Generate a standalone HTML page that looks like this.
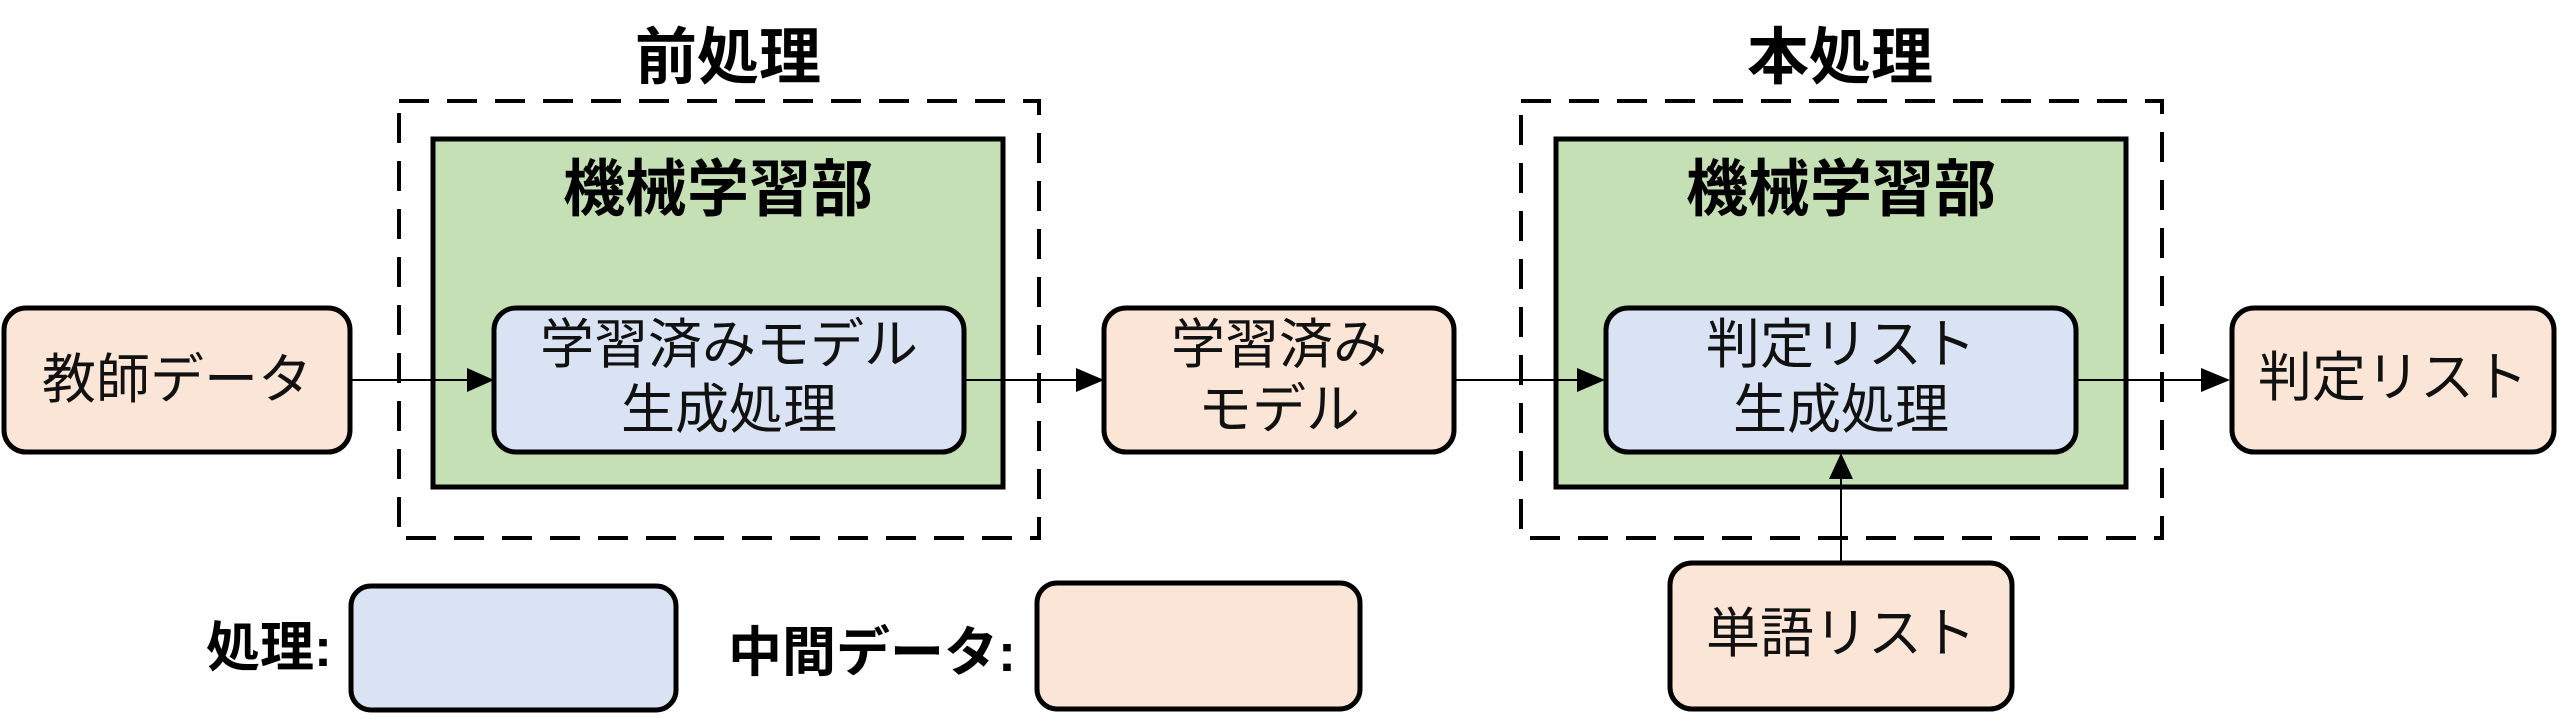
<!DOCTYPE html>
<html><head><meta charset="utf-8"><style>
html,body{margin:0;padding:0;background:#fff;}
svg{display:block;}
text{font-family:"Liberation Sans","Noto Sans CJK JP",sans-serif;}
.n{font-size:54px;fill:#111;text-anchor:middle;dominant-baseline:central;}
.b{font-weight:bold;fill:#000;text-anchor:middle;dominant-baseline:central;}
</style></head><body>
<svg width="2566" height="724" viewBox="0 0 2566 724" xmlns="http://www.w3.org/2000/svg">
<defs><marker id="ah" markerWidth="10" markerHeight="10" refX="0" refY="5" orient="auto" markerUnits="userSpaceOnUse"></marker></defs>
<!-- titles -->
<text class="b" x="728" y="58" font-size="62">前処理</text>
<text class="b" x="1840" y="58" font-size="62">本処理</text>
<!-- dashed boxes -->
<rect x="399" y="101" width="640" height="437" fill="none" stroke="#000" stroke-width="4" stroke-dasharray="30,18"/>
<rect x="1521" y="101" width="641" height="437" fill="none" stroke="#000" stroke-width="4" stroke-dasharray="30,18"/>
<!-- green -->
<rect x="433" y="139" width="570" height="348" fill="#c5e0b4" stroke="#000" stroke-width="5"/>
<rect x="1556" y="139" width="570" height="348" fill="#c5e0b4" stroke="#000" stroke-width="5"/>
<text class="b" x="718" y="190" font-size="62">機械学習部</text>
<text class="b" x="1841" y="190" font-size="62">機械学習部</text>
<!-- lines -->
<g stroke="#000" stroke-width="2">
<line x1="350" y1="380" x2="470" y2="380"/>
<line x1="964" y1="380" x2="1080" y2="380"/>
<line x1="1454" y1="380" x2="1580" y2="380"/>
<line x1="2076" y1="380" x2="2204" y2="380"/>
<line x1="1841" y1="562" x2="1841" y2="475"/>
</g>
<g fill="#000">
<polygon points="467,368 494,380 467,392"/>
<polygon points="1076,368 1104,380 1076,392"/>
<polygon points="1577,368 1605,380 1577,392"/>
<polygon points="2201,368 2230,380 2201,392"/>
<polygon points="1829,479 1841,453 1853,479"/>
</g>
<!-- boxes -->
<rect x="4" y="308" width="346" height="144" rx="22" fill="#fbe5d6" stroke="#000" stroke-width="5"/>
<text class="n" x="177" y="380">教師データ</text>
<rect x="494" y="308" width="470" height="144" rx="22" fill="#dae3f3" stroke="#000" stroke-width="5"/>
<text class="n" x="729" y="345">学習済みモデル</text>
<text class="n" x="729" y="410">生成処理</text>
<rect x="1104" y="308" width="350" height="144" rx="22" fill="#fbe5d6" stroke="#000" stroke-width="5"/>
<text class="n" x="1279" y="345">学習済み</text>
<text class="n" x="1279" y="410">モデル</text>
<rect x="1606" y="308" width="470" height="144" rx="22" fill="#dae3f3" stroke="#000" stroke-width="5"/>
<text class="n" x="1841" y="345">判定リスト</text>
<text class="n" x="1841" y="410">生成処理</text>
<rect x="2232" y="308" width="322" height="144" rx="22" fill="#fbe5d6" stroke="#000" stroke-width="5"/>
<text class="n" x="2393" y="378">判定リスト</text>
<rect x="1670" y="563" width="342" height="146" rx="22" fill="#fbe5d6" stroke="#000" stroke-width="5"/>
<text class="n" x="1841" y="634">単語リスト</text>
<!-- legend -->
<text class="b" x="269" y="648" font-size="54">処理:</text>
<rect x="351" y="586" width="325" height="124" rx="20" fill="#dae3f3" stroke="#000" stroke-width="5"/>
<text class="b" x="872" y="653" font-size="54">中間データ:</text>
<rect x="1037" y="583" width="323" height="126" rx="20" fill="#fbe5d6" stroke="#000" stroke-width="5"/>
</svg>
</body></html>
